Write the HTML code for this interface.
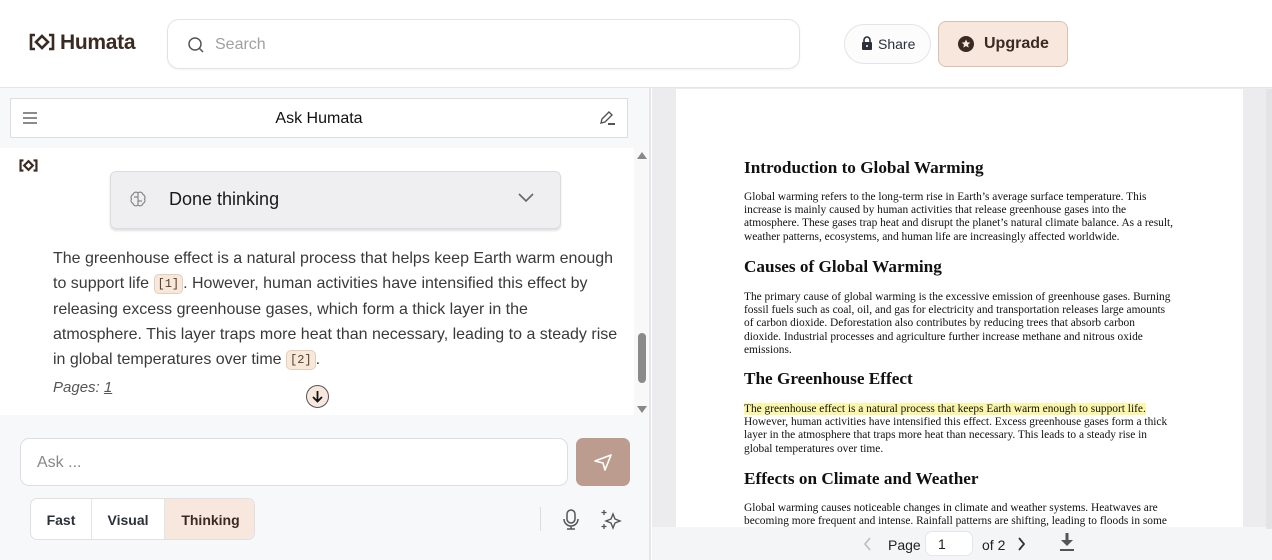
<!DOCTYPE html>
<html><head><meta charset="utf-8"><style>
*{box-sizing:border-box;margin:0;padding:0}
body{width:1272px;height:560px;overflow:hidden;background:#fff;font-family:"Liberation Sans",sans-serif;position:relative;color:#222}
.abs{position:absolute}
.pdf p{font-family:"Liberation Serif",serif;font-size:11.4px;line-height:13.2px;color:#111;position:absolute;left:744px;width:434px}
.pdf h2{font-family:"Liberation Serif",serif;font-size:17.2px;font-weight:bold;color:#111;position:absolute;left:744px}
.cite{display:inline-block;background:#f7e8dc;border:1px solid #e5cdbb;border-radius:5px;font-size:12px;font-family:"Liberation Mono",monospace;padding:0 3px;line-height:18px;color:#5a3a2a;vertical-align:1px}
</style></head><body>
<div class="abs" style="left:0;top:0;width:1272px;height:88px;background:#fff;border-bottom:1px solid #e6e6e8"></div>
<svg class="abs" style="left:29px;top:33px" width="26" height="18" viewBox="0 0 26 18"><path d="M6 2H2v14h4M20 2h4v14h-4" stroke="#3a2a22" stroke-width="2.6" fill="none"/><path d="M13 3l6 6-6 6-6-6z" stroke="#3a2a22" stroke-width="2.6" fill="none"/></svg>
<div class="abs" style="left:60px;top:31px;font-size:21px;font-weight:bold;color:#3a2a22;letter-spacing:-0.3px">Humata</div>
<div class="abs" style="left:167px;top:19px;width:633px;height:50px;border:1px solid #e3e3e6;border-radius:12px;box-shadow:0 1px 2px rgba(0,0,0,.05)"></div>
<svg class="abs" style="left:187px;top:36px" width="18" height="18" viewBox="0 0 18 18"><circle cx="8" cy="8" r="6" stroke="#555" stroke-width="1.5" fill="none"/><path d="M12.5 12.5l3.5 3.5" stroke="#555" stroke-width="1.5"/></svg>
<div class="abs" style="left:215px;top:36px;font-size:16px;color:#a0a0a5">Search</div>
<div class="abs" style="left:844px;top:24px;width:87px;height:40px;border:1px solid #e4e4e8;border-radius:20px;background:#fcfcfd"></div>
<svg class="abs" style="left:861px;top:36px" width="12" height="14" viewBox="0 0 12 14"><path d="M3 6V4a3 3 0 016 0v2" stroke="#2a2f3a" stroke-width="1.6" fill="none"/><rect x="1" y="6" width="10" height="8" rx="1" fill="#2a2f3a"/><circle cx="6" cy="10" r="1" fill="#fff"/></svg>
<div class="abs" style="left:878px;top:36px;font-size:14px;color:#2a2f3a">Share</div>
<div class="abs" style="left:938px;top:21px;width:130px;height:46px;border:1px solid #dcc0ae;border-radius:8px;background:#f7e7dc"></div>
<svg class="abs" style="left:958px;top:36px" width="16" height="16" viewBox="0 0 16 16"><circle cx="8" cy="8" r="8" fill="#3a2a22"/><path d="M8 3.5l1.3 2.8 3 .3-2.3 2 .7 3L8 10l-2.7 1.6.7-3-2.3-2 3-.3z" fill="#f7e7dc"/></svg>
<div class="abs" style="left:984px;top:35px;font-size:16px;font-weight:bold;color:#3a2a22">Upgrade</div>

<div class="abs" style="left:0;top:88px;width:651px;height:472px;background:#f7f8fa;border-right:2px solid #e6e6ea"></div>
<div class="abs" style="left:0;top:148px;width:634px;height:267px;background:#fff"></div>
<div class="abs" style="left:10px;top:98px;width:618px;height:40px;background:#fff;border:1px solid #dedee2"></div>
<svg class="abs" style="left:22px;top:111px" width="16" height="14"><path d="M1 2h14M1 7h14M1 12h14" stroke="#666" stroke-width="1.5"/></svg>
<div class="abs" style="left:0;top:110px;width:638px;text-align:center;font-size:16px;color:#111">Ask Humata</div>
<svg class="abs" style="left:598px;top:110px" width="18" height="16" viewBox="0 0 18 16"><path d="M3 13l1-4 7-7 3 3-7 7z" stroke="#555" stroke-width="1.4" fill="none"/><path d="M10 14h7" stroke="#555" stroke-width="2"/></svg>
<svg class="abs" style="left:19px;top:159px" width="19" height="13" viewBox="0 0 26 18"><path d="M6 2H2v14h4M20 2h4v14h-4" stroke="#3a2a22" stroke-width="3" fill="none"/><path d="M13 3l6 6-6 6-6-6z" stroke="#3a2a22" stroke-width="3" fill="none"/></svg>
<div class="abs" style="left:636px;top:148px;width:12px;height:267px;background:#f8f8f9"></div>
<div class="abs" style="left:637px;top:152px;width:0;height:0;border-left:5px solid transparent;border-right:5px solid transparent;border-bottom:7px solid #888"></div>
<div class="abs" style="left:637px;top:406px;width:0;height:0;border-left:5px solid transparent;border-right:5px solid transparent;border-top:7px solid #888"></div>
<div class="abs" style="left:638px;top:333px;width:8px;height:50px;border-radius:4px;background:#8a8a8a"></div>
<div class="abs" style="left:110px;top:171px;width:451px;height:58px;background:#efeff2;border:1px solid #dcdce0;border-radius:6px;box-shadow:0 2px 2px rgba(0,0,0,.12)"></div>
<svg class="abs" style="left:128px;top:189px" width="20" height="20" viewBox="0 0 20 20"><g stroke="#888" stroke-width="1.2" fill="none"><path d="M10 3v14"/><path d="M10 4a3 3 0 00-5 1.5 3 3 0 00-1.5 4.5 3 3 0 001.5 4.5A3 3 0 0010 16"/><path d="M10 4a3 3 0 015 1.5 3 3 0 011.5 4.5 3 3 0 01-1.5 4.5A3 3 0 0110 16"/><path d="M6 8h4M10 12h4"/></g></svg>
<div class="abs" style="left:169px;top:189px;font-size:18px;color:#1a1a1a">Done thinking</div>
<svg class="abs" style="left:517px;top:192px" width="18" height="12"><path d="M2 2l7 7 7-7" stroke="#666" stroke-width="1.6" fill="none"/></svg>
<div class="abs" style="left:53px;top:246px;width:566px;font-size:16px;line-height:25.3px;color:#3a3a3a">The greenhouse effect is a natural process that helps keep Earth warm enough to support life <span class="cite">[1]</span>. However, human activities have intensified this effect by releasing excess greenhouse gases, which form a thick layer in the atmosphere. This layer traps more heat than necessary, leading to a steady rise in global temperatures over time <span class="cite">[2]</span>.</div>
<div class="abs" style="left:53px;top:379px;font-size:15px;font-style:italic;color:#555">Pages: <u>1</u></div>
<div class="abs" style="left:306px;top:385px;width:23px;height:23px;border-radius:50%;background:#f7e7dc;border:1px solid #555"></div>
<svg class="abs" style="left:310px;top:389px" width="15" height="15"><path d="M7.5 2v10M3 8l4.5 4.5L12 8" stroke="#111" stroke-width="1.8" fill="none"/></svg>
<div class="abs" style="left:20px;top:438px;width:548px;height:48px;background:#fff;border:1px solid #dedee2;border-radius:9px"></div>
<div class="abs" style="left:37px;top:454px;font-size:16px;color:#888">Ask ...</div>
<div class="abs" style="left:576px;top:438px;width:54px;height:48px;background:#bc9c8e;border-radius:7px"></div>
<svg class="abs" style="left:593px;top:453px" width="20" height="18" viewBox="0 0 20 18"><path d="M2 8L18 2l-6 15-2-7z" stroke="#fff" stroke-width="1.6" fill="none" stroke-linejoin="round"/></svg>
<div class="abs" style="left:30px;top:498px;width:225px;height:42px;background:#fff;border:1px solid #e0e0e4;border-radius:7px;overflow:hidden">
<div class="abs" style="left:0;top:0;width:61px;height:40px;border-right:1px solid #e5e5e8;font-size:14px;font-weight:bold;color:#2a2f3a;text-align:center;line-height:42px">Fast</div>
<div class="abs" style="left:61px;top:0;width:73px;height:40px;border-right:1px solid #e5e5e8;font-size:14px;font-weight:bold;color:#2a2f3a;text-align:center;line-height:42px">Visual</div>
<div class="abs" style="left:134px;top:0;width:91px;height:40px;background:#f7e7dc;font-size:14px;font-weight:bold;color:#3a2a22;text-align:center;line-height:42px">Thinking</div>
</div>
<div class="abs" style="left:540px;top:507px;width:1px;height:24px;background:#ddd"></div>
<svg class="abs" style="left:562px;top:508px" width="18" height="24" viewBox="0 0 18 24"><rect x="5" y="2" width="8" height="13" rx="4" stroke="#555" stroke-width="1.5" fill="none"/><path d="M2 11a7 7 0 0014 0M9 18v3M5 21h8" stroke="#555" stroke-width="1.5" fill="none"/></svg>
<svg class="abs" style="left:599px;top:508px" width="24" height="24" viewBox="0 0 24 24"><path d="M14 6l2 5 5 2-5 2-2 5-2-5-5-2 5-2z" stroke="#555" stroke-width="1.4" fill="none"/><path d="M5 2v5M2.5 4.5h5M5 16v5M2.5 18.5h5" stroke="#555" stroke-width="1.3"/></svg>

<div class="abs" style="left:652px;top:88px;width:620px;height:472px;background:#ececef"></div>
<div class="abs" style="left:676px;top:89px;width:567px;height:440px;background:#fff"></div>
<div class="pdf">
<h2 style="top:158px">Introduction to Global Warming</h2>
<p style="top:191px">Global warming refers to the long-term rise in Earth’s average surface temperature. This increase is mainly caused by human activities that release greenhouse gases into the atmosphere. These gases trap heat and disrupt the planet’s natural climate balance. As a result, weather patterns, ecosystems, and human life are increasingly affected worldwide.</p>
<h2 style="top:257px">Causes of Global Warming</h2>
<p style="top:291px;width:500px;white-space:nowrap">The primary cause of global warming is the excessive emission of greenhouse gases. Burning<br>fossil fuels such as coal, oil, and gas for electricity and transportation releases large amounts<br>of carbon dioxide. Deforestation also contributes by reducing trees that absorb carbon<br>dioxide. Industrial processes and agriculture further increase methane and nitrous oxide<br>emissions.</p>
<h2 style="top:369px">The Greenhouse Effect</h2>
<p style="top:403px"><span style="background:#fbf6a8">The greenhouse effect is a natural process that keeps Earth warm enough to support life.</span> However, human activities have intensified this effect. Excess greenhouse gases form a thick layer in the atmosphere that traps more heat than necessary. This leads to a steady rise in global temperatures over time.</p>
<h2 style="top:469px">Effects on Climate and Weather</h2>
<p style="top:502px">Global warming causes noticeable changes in climate and weather systems. Heatwaves are becoming more frequent and intense. Rainfall patterns are shifting, leading to floods in some</p>
</div>
<div class="abs" style="left:652px;top:527px;width:620px;height:33px;background:#f4f5f7"></div>
<svg class="abs" style="left:862px;top:536px" width="10" height="16"><path d="M8 2L3 8l5 6" stroke="#bbb" stroke-width="1.6" fill="none"/></svg>
<div class="abs" style="left:888px;top:537px;font-size:14px;color:#222">Page</div>
<div class="abs" style="left:925px;top:531px;width:48px;height:25px;background:#fff;border-radius:7px;border:1px solid #e6e6ea;font-size:14px;padding:4px 0 0 12px;color:#222">1</div>
<div class="abs" style="left:982px;top:537px;font-size:14px;color:#222">of 2</div>
<svg class="abs" style="left:1017px;top:536px" width="10" height="16"><path d="M2 2l5 6-5 6" stroke="#333" stroke-width="1.8" fill="none"/></svg>
<svg class="abs" style="left:1058px;top:532px" width="18" height="20"><path d="M9 1v10" stroke="#555" stroke-width="3"/><path d="M3 8l6 6 6-6z" fill="#555"/><path d="M2 18h14" stroke="#555" stroke-width="2"/></svg>
<div class="abs" style="left:1266px;top:89px;width:6px;height:440px;background:#e4e4e6"></div>
</body></html>
